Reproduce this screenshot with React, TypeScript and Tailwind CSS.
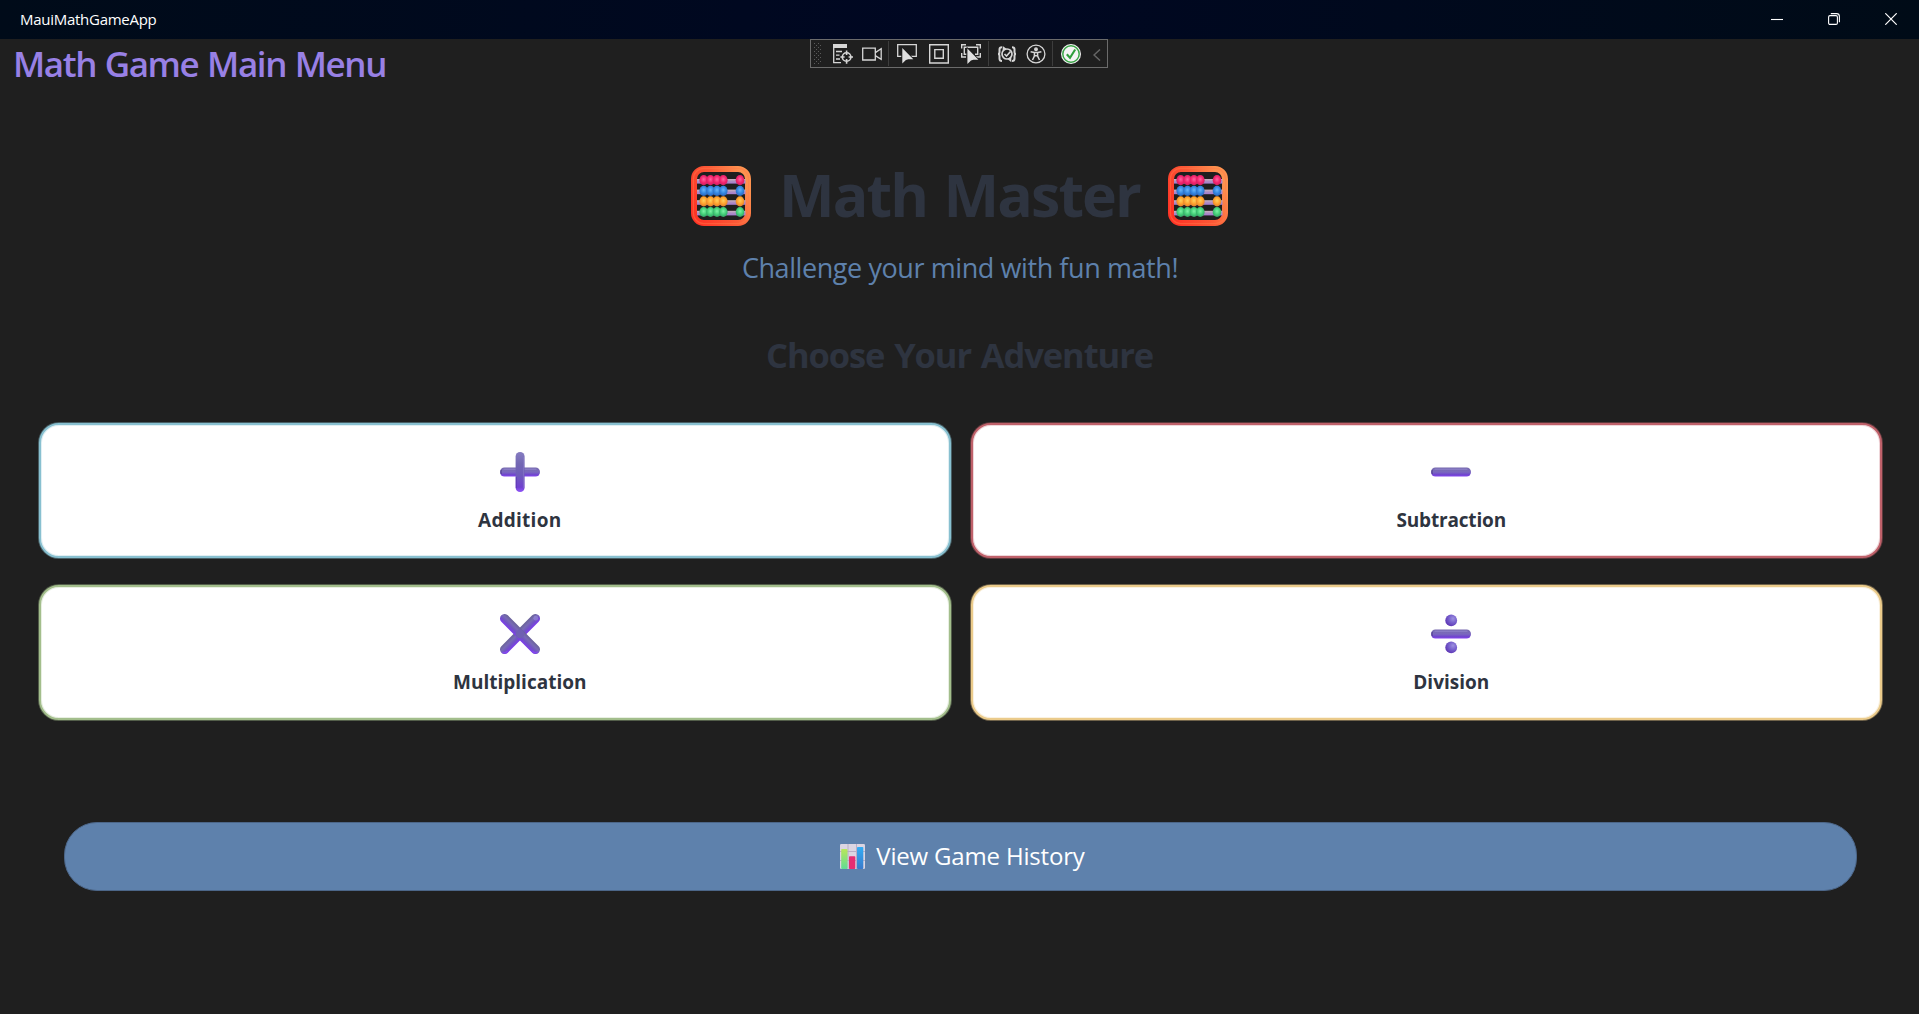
import type { ReactNode } from 'react';

const beads = ['#f5246e', '#3487e0', '#ffa22e', '#43cf78'];
const beadLights = ['#ff65a0', '#68b5fb', '#ffd05c', '#7df3a5'];
const beadShades = ['#c5205f', '#2c63b8', '#d97b2d', '#329a62'];

function Abacus({ id }: { id: string }) {
  return (
    <svg className="mt-[4px] size-[60px] shrink-0" viewBox="0 0 60 60">
      <defs>
        <linearGradient id={`${id}-frame`} x1="0" y1="0.8" x2="1" y2="0.3">
          <stop offset="0" stopColor="#ff3426" />
          <stop offset="0.55" stopColor="#fb5836" />
          <stop offset="1" stopColor="#ff934f" />
        </linearGradient>
        <linearGradient id={`${id}-rod`} x1="0" y1="0" x2="0" y2="1">
          <stop offset="0" stopColor="#cbb4bd" />
          <stop offset="0.5" stopColor="#ad8fc4" />
          <stop offset="1" stopColor="#a57bd0" />
        </linearGradient>
        {beads.map((c, i) => (
          <radialGradient key={c} id={`${id}-b${i}`} cx="0.5" cy="0.42" r="0.6">
            <stop offset="0" stopColor={beadLights[i]} />
            <stop offset="0.55" stopColor={c} />
            <stop offset="1" stopColor={beadShades[i]} />
          </radialGradient>
        ))}
      </defs>
      <rect x="3" y="3" width="54" height="54" rx="10" fill="none" stroke={`url(#${id}-frame)`} strokeWidth="6" />
      <rect x="2.4" y="2.4" width="55.2" height="55.2" rx="10.5" fill="none" stroke="#ff7a4a" strokeOpacity="0.45" strokeWidth="1.2" />
      {beads.map((c, i) => (
        <g key={c}>
          <rect x="6" y={13 + i * 10.6} width="48.5" height="4.6" fill={`url(#${id}-rod)`} />
          {[12.7, 19.5, 26, 32.3, 49].map((x) => (
            <ellipse key={x} cx={x} cy={14.2 + i * 10.6} rx="4.3" ry="5.1" fill={`url(#${id}-b${i})`} />
          ))}
        </g>
      ))}
    </svg>
  );
}

function Bar() {
  return (
    <>
      <rect x="0" y="15.5" width="40" height="9" rx="4.4" fill="url(#op-bar)" />
      <path d="M4 17.3H36" stroke="#9488cf" strokeOpacity="0.6" strokeWidth="1.4" strokeLinecap="round" />
      <path d="M1.4 18Q0.6 20 1.4 22" stroke="#4a3b86" strokeOpacity="0.7" strokeWidth="1.4" fill="none" />
    </>
  );
}

function OpDefs() {
  return (
    <defs>
      <linearGradient id="op-bar" x1="0" y1="0" x2="0" y2="1">
        <stop offset="0" stopColor="#7568ad" />
        <stop offset="0.5" stopColor="#7a69bd" />
        <stop offset="0.8" stopColor="#7045cf" />
        <stop offset="1" stopColor="#8445ee" />
      </linearGradient>
      <linearGradient id="op-post" gradientUnits="userSpaceOnUse" x1="0" y1="0" x2="0" y2="40">
        <stop offset="0" stopColor="#867dc1" />
        <stop offset="0.3" stopColor="#7267b3" />
        <stop offset="0.6" stopColor="#6f5abb" />
        <stop offset="0.88" stopColor="#7040d0" />
        <stop offset="1" stopColor="#9257fa" />
      </linearGradient>
      <radialGradient id="op-dot" cx="0.65" cy="0.35" r="0.7">
        <stop offset="0" stopColor="#9d90df" />
        <stop offset="0.5" stopColor="#7760cd" />
        <stop offset="1" stopColor="#5d35b4" />
      </radialGradient>
      <linearGradient id="op-arm" x1="0" y1="0" x2="0" y2="1">
        <stop offset="0" stopColor="#6a6299" />
        <stop offset="0.35" stopColor="#776bb4" />
        <stop offset="0.65" stopColor="#7153c4" />
        <stop offset="1" stopColor="#7c3cec" />
      </linearGradient>
    </defs>
  );
}

function Op({ children }: { children: ReactNode }) {
  return <svg className="size-10 shrink-0" viewBox="0 0 40 40"><OpDefs />{children}</svg>;
}

const plus = (
  <Op>
    <Bar />
    <rect x="15.6" y="0" width="9" height="40" rx="4.4" fill="url(#op-post)" />
    <path d="M23.5 5V36" stroke="#8b7dca" strokeOpacity="0.5" strokeWidth="1.2" />
    <path d="M16.4 25V36" stroke="#5a35ae" strokeOpacity="0.6" strokeWidth="1.2" />
  </Op>
);
const minus = <Op><Bar /></Op>;
const times = (
  <Op>
    <rect x="-6.4" y="15.4" width="52.8" height="9.2" rx="4.6" fill="url(#op-arm)" transform="rotate(-45 20 20)" />
    <rect x="-6.4" y="15.4" width="52.8" height="9.2" rx="4.6" fill="url(#op-arm)" transform="rotate(45 20 20)" />
    <circle cx="20" cy="20" r="4.4" fill="#6f60b2" />
    <circle cx="35.8" cy="4.2" r="2.4" fill="#9a8cdc" fillOpacity="0.6" />
    <path d="M3 38.4Q5 39.2 7 37.6M33 37.6Q35.5 39.4 37.6 38" fill="none" stroke="#8a48f8" strokeOpacity="0.7" strokeWidth="1.5" strokeLinecap="round" />
  </Op>
);
const divide = (
  <Op>
    <Bar />
    <circle cx="20.2" cy="6.4" r="5.9" fill="url(#op-dot)" />
    <circle cx="20.2" cy="33.4" r="5.9" fill="url(#op-dot)" />
  </Op>
);

function Card({ icon, label, tone, text }: { icon: ReactNode; label: string; tone: string; text: string }) {
  return (
    <button className={`flex h-[135px] flex-col items-center rounded-[20px] border-2 bg-white pt-[27px] pl-[50px] ${tone}`}>
      {icon}
      <span className={`mt-[14px] text-[19px] leading-7 font-bold whitespace-nowrap text-[#2e3440] ${text}`}>{label}</span>
    </button>
  );
}

function Tool({ className, children }: { className: string; children: ReactNode }) {
  return (
    <svg className={`size-5 shrink-0 ${className}`} viewBox="0 0 20 20" fill="none" stroke="#d6d6d6" strokeWidth="1.3">
      {children}
    </svg>
  );
}

function Pointer({ at }: { at: string }) {
  return <path d="M0 0V15.5L3.6 12L6 11.2H11Z" transform={at} fill="#e0e0e0" stroke="#1f1f1f" strokeWidth="1.6" paintOrder="stroke" />;
}

function DebugToolbar() {
  return (
    <div className="absolute top-[39px] left-[810px] flex h-[29px] w-[298px] items-center border border-[#6b6b6b] bg-[#1f1f1f]">
      <svg className="ml-[3px] h-[22px] w-2 shrink-0" viewBox="0 0 8 22" fill="#5a5a5a">
        {[0, 1, 2, 3, 4, 5, 6, 7, 8, 9, 10].map((r) => (
          <g key={r}>
            <rect x={r % 2 ? 2 : 0} y={r * 2} width="1" height="1" />
            <rect x={r % 2 ? 6 : 4} y={r * 2} width="1" height="1" />
          </g>
        ))}
      </svg>
      <Tool className="ml-[11px]">
        <path d="M0 0H14V4H0Z" fill="#d6d6d6" stroke="none" />
        <path d="M.7 4V18.6H8M3 7.5H9M3 11.2H6.5M3 15H7" />
        <circle cx="13.6" cy="13" r="4.3" strokeWidth="1.6" />
        <path d="M13.6 6.5V11M13.6 15V19.8M7.4 13H11.6M15.6 13H20" strokeWidth="1.6" />
      </Tool>
      <Tool className="ml-[9px]">
        <path d="M.7 4.2H13.3V16H.7ZM13.3 8.6L19.2 4.8V15.4L13.3 11.6" />
      </Tool>
      <i className="ml-[6px] h-[25px] w-px shrink-0 bg-[#3d3d3d]" />
      <Tool className="ml-[8px]">
        <path d="M4.5 12.3H.7V.7H19.3V12.3H13.5" />
        <Pointer at="translate(5.3 4)" />
      </Tool>
      <Tool className="ml-[12px]">
        <path d="M.7 .7H19.3V19H.7ZM5.8 5.6H14.3V14.2H5.8Z" strokeWidth="1.4" />
      </Tool>
      <Tool className="ml-[12px]">
        <path d="M.7 4.5V.7H5M15 .7H19.3V4.5M.7 9V13H5M19.3 9V13H15M5.5 10.2H3.3V3.2H16.7V10.2H14" strokeWidth="1.4" />
        <Pointer at="translate(6.4 4.5)" />
      </Tool>
      <i className="ml-[7px] h-[25px] w-px shrink-0 bg-[#3d3d3d]" />
      <Tool className="ml-[8px]">
        <path d="M5 3.2Q2.5 3.2 2.5 5.5V8Q2.5 10 1 10Q2.5 10 2.5 12V14.5Q2.5 17 5 17M15 3.2Q17.5 3.2 17.5 5.5V8Q17.5 10 19 10Q17.5 10 17.5 12V14.5Q17.5 17 15 17" strokeWidth="2" />
        <path d="M6.5 6.4V3.6L9 5.5M13.5 13.6V16.5L11 14.5" strokeWidth="1.6" />
        <circle cx="10" cy="10" r="5" strokeWidth="1.7" />
        <path d="M7.5 10L9.5 12L13.5 7.5" strokeWidth="1.6" />
      </Tool>
      <Tool className="ml-[9px]">
        <circle cx="10" cy="10" r="8.9" />
        <circle cx="10" cy="5.2" r="1.3" fill="#d6d6d6" />
        <path d="M4.6 7.8L8.4 8.6H11.6L15.4 7.8M8.4 8.6V12L6.5 16M11.6 8.6V12L13.5 16M8.6 11.8H11.4" strokeWidth="1.5" />
      </Tool>
      <i className="ml-[6px] h-[25px] w-px shrink-0 bg-[#3d3d3d]" />
      <Tool className="ml-[8px]">
        <circle cx="10" cy="10" r="10" fill="#f4f4f4" stroke="none" />
        <circle cx="10" cy="10" r="8.2" stroke="#3aa547" strokeWidth="1.5" />
        <path d="M5.8 10.2L9 13.8L14.2 5.5" stroke="#2f9e3c" strokeWidth="2.1" />
      </Tool>
      <svg className="mt-0.5 ml-3 h-3 w-2 shrink-0" viewBox="0 0 8 12" fill="none" stroke="#666" strokeWidth="1.5">
        <path d="M7 .5L1 6L7 11.5" />
      </svg>
    </div>
  );
}

function TitleBar() {
  return (
    <div className="flex h-[39px] items-center bg-linear-to-r from-[#000b19] via-[#000722] to-[#000b17] pb-0.5 text-white">
      <span className="ml-[20px] grow pt-px text-[15px] tracking-[-0.27px]">MauiMathGameApp</span>
      <button className="flex h-full w-[57px] items-center justify-center">
        <svg className="size-3" viewBox="0 0 12 12" stroke="currentColor" strokeWidth="1.1"><path d="M0 6.5H12" /></svg>
      </button>
      <button className="flex h-full w-[57px] items-center justify-center">
        <svg className="size-3" viewBox="0 0 12 12" fill="none" stroke="currentColor" strokeWidth="1.1">
          <rect x=".6" y="2.6" width="8.8" height="8.8" rx="1.4" />
          <path d="M2.8 .6H8.6Q11.4 .6 11.4 3.4V9.2" />
        </svg>
      </button>
      <button className="flex h-full w-[57px] items-center justify-center">
        <svg className="size-3" viewBox="0 0 12 12" stroke="currentColor" strokeWidth="1.2"><path d="M.3 .3L11.7 11.7M11.7 .3L.3 11.7" /></svg>
      </button>
    </div>
  );
}

function ChartIcon() {
  return (
    <svg className="size-[25px] shrink-0" viewBox="0 0 25 25">
      <defs>
        <linearGradient id="c-green" x1="0" y1="0" x2="0" y2="1"><stop stopColor="#b9e65a" /><stop offset="1" stopColor="#60dc95" /></linearGradient>
        <linearGradient id="c-blue" x1="0" y1="0" x2="0" y2="1"><stop stopColor="#33adf5" /><stop offset="1" stopColor="#3a7acb" /></linearGradient>
      </defs>
      <rect width="25" height="25" rx="1.2" fill="#dbd5e2" />
      <path d="M0 7.5H25M0 16.5H25M8 0V25M16.5 0V25" stroke="#b9aec6" strokeWidth="1" />
      <rect x="1.2" y="5" width="6.3" height="20" rx=".8" fill="url(#c-green)" />
      <rect x="9" y="12.2" width="6.3" height="12.8" rx=".8" fill="#e62d72" />
      <rect x="17" y="3" width="6.3" height="22" rx=".8" fill="url(#c-blue)" />
    </svg>
  );
}

export default function App() {
  return (
    <div className="relative h-[1014px] w-full overflow-hidden bg-[#1f1f1f] font-['Open_Sans',sans-serif]">
      <TitleBar />
      <DebugToolbar />
      <h1 className="pt-px pl-[13px] text-[35px] leading-[48px] font-semibold tracking-[-1.4px] text-[#9880e5] [word-spacing:1px]">Math Game Main Menu</h1>
      <main className="flex flex-col px-[39px] pt-[65px] text-[#2e3440]">
        <div className="flex items-center justify-center gap-[28.5px]">
          <Abacus id="left" />
          <h2 className="pt-px text-[59px] leading-[80px] font-bold tracking-[-1.9px] [word-spacing:3px]">Math Master</h2>
          <Abacus id="right" />
        </div>
        <p className="mt-[14px] pl-px text-center text-[27px] leading-10 tracking-[-0.42px] text-[#5e81ac]">Challenge your mind with fun math!</p>
        <h3 className="mt-[43px] text-center text-[34.5px] leading-[48px] font-bold tracking-[-1.1px] [word-spacing:2px]">Choose Your Adventure</h3>
        <div className="mt-[44px] -mr-[2px] grid grid-cols-2 gap-x-[20px] gap-y-[27px]">
          <Card icon={plus} label="Addition" text="tracking-[0.26px]" tone="border-[#88c0d0] shadow-[0_0_0_1px_#88c0d066,inset_0_0_0_1px_#88c0d040]" />
          <Card icon={minus} label="Subtraction" text="tracking-[-0.18px]" tone="border-[#bf616a] shadow-[0_0_0_1px_#bf616a66,inset_0_0_0_1px_#bf616a40]" />
          <Card icon={times} label="Multiplication" text="tracking-normal" tone="border-[#a3be8c] shadow-[0_0_0_1px_#a3be8c66,inset_0_0_0_1px_#a3be8c40]" />
          <Card icon={divide} label="Division" text="tracking-normal" tone="border-[#ebcb8b] shadow-[0_0_0_1px_#ebcb8b66,inset_0_0_0_1px_#ebcb8b40]" />
        </div>
        <button className="mt-[102px] mr-[23px] ml-[25px] flex h-[69px] items-center justify-center gap-[11px] rounded-[33px] border border-[#4c6688] bg-[#5e81ac] pb-px pl-1 text-2xl tracking-[-0.18px] text-white">
          <ChartIcon />
          <span>View Game History</span>
        </button>
      </main>
    </div>
  );
}
